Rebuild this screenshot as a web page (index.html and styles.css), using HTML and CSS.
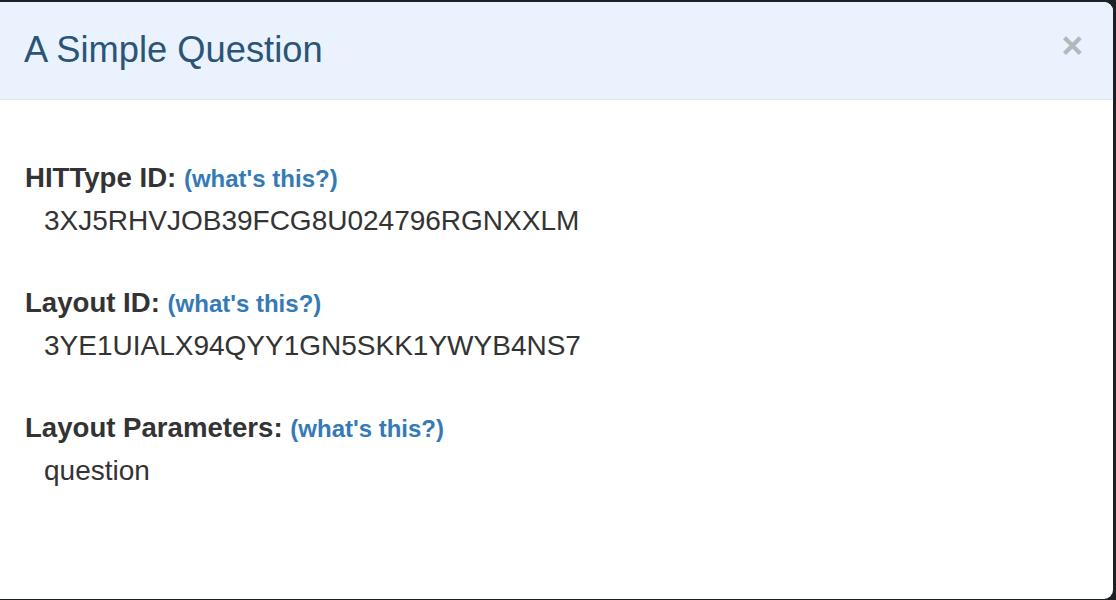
FILE: index.html
```html
<!DOCTYPE html>
<html>
<head>
<meta charset="utf-8">
<link rel="stylesheet" href="styles.css">
</head>
<body>
<div class="modal">
  <div class="modal-header">
    <h4 class="modal-title">A Simple Question</h4>
    <span class="close">&times;</span>
  </div>
  <div class="modal-body">
    <div class="field">
      <div class="label">HITType ID: <a class="help">(what's this?)</a></div>
      <div class="value">3XJ5RHVJOB39FCG8U024796RGNXXLM</div>
    </div>
    <div class="field">
      <div class="label">Layout ID: <a class="help">(what's this?)</a></div>
      <div class="value">3YE1UIALX94QYY1GN5SKK1YWYB4NS7</div>
    </div>
    <div class="field">
      <div class="label">Layout Parameters: <a class="help">(what's this?)</a></div>
      <div class="value">question</div>
    </div>
  </div>
</div>
</body>
</html>
```
FILE: styles.css
```css
html, body {
  margin: 0;
  padding: 0;
  height: 100%;
  overflow: hidden;
}
body {
  background: #1d2125;
  font-family: "Liberation Sans", Arial, Helvetica, sans-serif;
  color: #333333;
}
.modal {
  margin: 2px 3px 0 -10px;
  width: 1123px;
  height: 597px;
  background: #ffffff;
  border-radius: 9px;
  overflow: hidden;
  display: flex;
  flex-direction: column;
}
.modal-header {
  background: #eaf2fd;
  border-bottom: 1px solid #e5e5e5;
  padding: 28px 30px 29px 34px;
  display: flex;
  justify-content: space-between;
  align-items: flex-start;
}
.modal-title {
  margin: 0;
  font-size: 36.3px;
  line-height: 40px;
  font-weight: normal;
  color: #2b5577;
}
.close {
  font-size: 37px;
  font-weight: bold;
  line-height: 34px;
  color: #b3b8bd;
  margin-top: -1px;
  cursor: pointer;
}
.modal-body {
  padding: 58px 34px 0 35px;
  display: flex;
  flex-direction: column;
  gap: 42px;
}
.label {
  font-size: 27.6px;
  font-weight: bold;
  line-height: 40px;
  color: #333333;
}
.help {
  font-size: 24px;
  color: #337ab7;
  text-decoration: none;
}
.value {
  margin-top: 2px;
  padding-left: 19px;
  font-size: 28px;
  line-height: 40px;
  color: #333333;
}
```
